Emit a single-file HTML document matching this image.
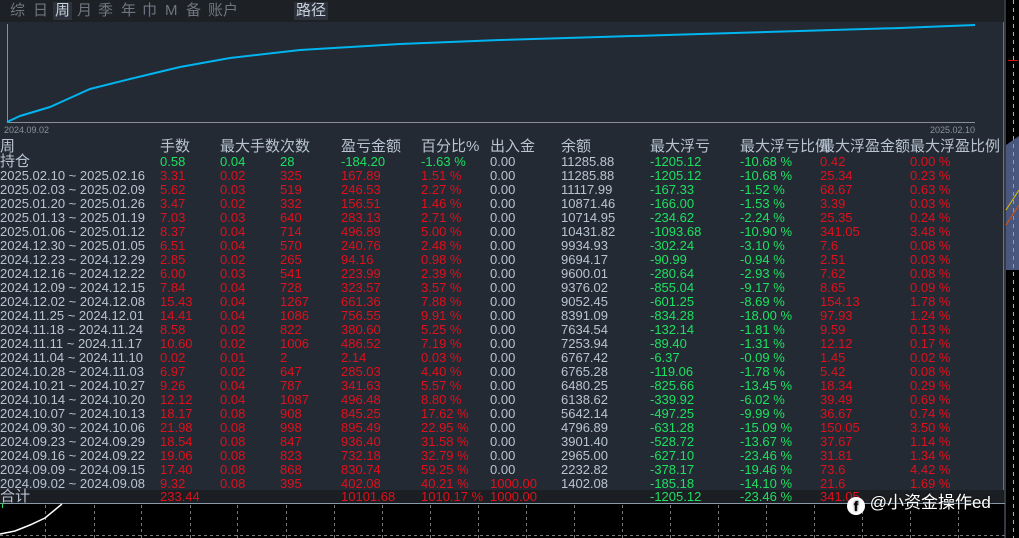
<!DOCTYPE html>
<html><head><meta charset="utf-8">
<style>
*{margin:0;padding:0;box-sizing:border-box}
body{width:1019px;height:538px;background:#000;position:relative;overflow:hidden;font-family:"Liberation Sans","Noto Sans CJK SC",sans-serif}
#top{position:absolute;left:0;top:0;width:1004px;height:22px;background:#1d2025}
#top span{position:absolute;top:2px;font-size:15px;color:#6f7680;line-height:18px}
#top .on{background:#2c333d;color:#c8d0dc;padding:0 2px}
#panel{position:absolute;left:0;top:22px;width:1004px;height:481px;background:#232a33;border-right:1px solid #6a7380}
.r{position:absolute;left:0;height:14px;width:1004px;font-size:13px;line-height:14px;color:#b9c4d2;white-space:nowrap}
.r span{position:absolute;top:0}
.h{font-size:15px;color:#b9c4d2}
.a{left:0}.b{left:160px}.c{left:220px}.d{left:280px}.e{left:341px}.f{left:421px}.g{left:490px}.i{left:561px}.j{left:650px}.k{left:740px}.l{left:820px}.m{left:910px}
.R{color:#e0101c}.G{color:#1ee060}
</style></head><body>
<div id="top">
<span style="left:10px">综</span><span style="left:33px">日</span><span class="on" style="left:53px">周</span><span style="left:77px">月</span><span style="left:98px">季</span><span style="left:121px">年</span><span style="left:142px">巾</span><span style="left:165px">M</span><span style="left:186px">备</span><span style="left:208px">账户</span><span class="on" style="left:294px">路径</span>
</div>
<div id="panel"></div>
<svg style="position:absolute;left:0;top:0" width="1019" height="538">
<line x1="7.5" y1="24" x2="7.5" y2="122" stroke="#8a8f96"/>
<line x1="7" y1="122.5" x2="975" y2="122.5" stroke="#8a8f96"/>
<polyline fill="none" stroke="#00b4f0" stroke-width="2" points="7,122 20,116 50,107 70,98 90,89 130,79 180,67 230,58 300,50 400,44 500,40 600,37 700,34 800,31 900,28 975,25"/>
<line x1="1005" y1="0" x2="1005" y2="538" stroke="#6a7380"/>
<line x1="1013.5" y1="0" x2="1013.5" y2="538" stroke="#aaa" stroke-dasharray="4,4"/>
<line x1="1008" y1="60.5" x2="1018" y2="60.5" stroke="#e01010"/>
<polygon points="1006,145 1019,136 1019,270 1006,270" fill="#7a90d0" opacity=".6"/>
<polyline points="1006,210 1019,190" stroke="#e0c000" fill="none"/>
<polyline points="1006,225 1019,205" stroke="#e05000" fill="none"/>
<line x1="0" y1="503.5" x2="1005" y2="503.5" stroke="#8a9aaa"/>
<g stroke="#777" stroke-dasharray="3,3">
<line x1="45.5" y1="505" x2="45.5" y2="538"/><line x1="94.5" y1="505" x2="94.5" y2="538"/><line x1="141.5" y1="505" x2="141.5" y2="538"/><line x1="190.5" y1="505" x2="190.5" y2="538"/><line x1="237.5" y1="505" x2="237.5" y2="538"/><line x1="286.5" y1="505" x2="286.5" y2="538"/><line x1="334.5" y1="505" x2="334.5" y2="538"/><line x1="382.5" y1="505" x2="382.5" y2="538"/><line x1="430.5" y1="505" x2="430.5" y2="538"/><line x1="478.5" y1="505" x2="478.5" y2="538"/><line x1="526.5" y1="505" x2="526.5" y2="538"/><line x1="574.5" y1="505" x2="574.5" y2="538"/><line x1="622.5" y1="505" x2="622.5" y2="538"/><line x1="670.5" y1="505" x2="670.5" y2="538"/><line x1="718.5" y1="505" x2="718.5" y2="538"/><line x1="766.5" y1="505" x2="766.5" y2="538"/><line x1="814.5" y1="505" x2="814.5" y2="538"/><line x1="862.5" y1="505" x2="862.5" y2="538"/><line x1="910.5" y1="505" x2="910.5" y2="538"/><line x1="958.5" y1="505" x2="958.5" y2="538"/>
<line x1="0" y1="535.5" x2="1005" y2="535.5"/>
</g>
<polyline fill="none" stroke="#fff" stroke-width="1.5" points="0,534 15,531 30,525 45,518 62,504"/>
<line x1="2.5" y1="503" x2="2.5" y2="508" stroke="#1ee060"/>
</svg>
<div class="r" style="top:123px;font-size:9px;color:#8a929c"><span style="left:4px">2024.09.02</span><span style="left:930px">2025.02.10</span></div>
<div class="r h" style="top:139px;height:16px;line-height:16px"><span class="a">周</span><span class="b">手数</span><span class="c">最大手数次数</span><span class="e">盈亏金额</span><span class="f">百分比%</span><span class="g">出入金</span><span class="i">余额</span><span class="j">最大浮亏</span><span class="k">最大浮亏比例</span><span class="l">最大浮盈金额</span><span class="m">最大浮盈比例</span></div>
<div class="r" style="top:155px"><span class="a h">持仓</span><span class="b G">0.58</span><span class="c G">0.04</span><span class="d G">28</span><span class="e G">-184.20</span><span class="f G">-1.63 %</span><span class="g">0.00</span><span class="i">11285.88</span><span class="j G">-1205.12</span><span class="k G">-10.68 %</span><span class="l R">0.42</span><span class="m R">0.00 %</span></div>
<div class="r" style="top:169px"><span class="a">2025.02.10 ~ 2025.02.16</span><span class="b R">3.31</span><span class="c R">0.02</span><span class="d R">325</span><span class="e R">167.89</span><span class="f R">1.51 %</span><span class="g">0.00</span><span class="i">11285.88</span><span class="j G">-1205.12</span><span class="k G">-10.68 %</span><span class="l R">25.34</span><span class="m R">0.23 %</span></div>
<div class="r" style="top:183px"><span class="a">2025.02.03 ~ 2025.02.09</span><span class="b R">5.62</span><span class="c R">0.03</span><span class="d R">519</span><span class="e R">246.53</span><span class="f R">2.27 %</span><span class="g">0.00</span><span class="i">11117.99</span><span class="j G">-167.33</span><span class="k G">-1.52 %</span><span class="l R">68.67</span><span class="m R">0.63 %</span></div>
<div class="r" style="top:197px"><span class="a">2025.01.20 ~ 2025.01.26</span><span class="b R">3.47</span><span class="c R">0.02</span><span class="d R">332</span><span class="e R">156.51</span><span class="f R">1.46 %</span><span class="g">0.00</span><span class="i">10871.46</span><span class="j G">-166.00</span><span class="k G">-1.53 %</span><span class="l R">3.39</span><span class="m R">0.03 %</span></div>
<div class="r" style="top:211px"><span class="a">2025.01.13 ~ 2025.01.19</span><span class="b R">7.03</span><span class="c R">0.03</span><span class="d R">640</span><span class="e R">283.13</span><span class="f R">2.71 %</span><span class="g">0.00</span><span class="i">10714.95</span><span class="j G">-234.62</span><span class="k G">-2.24 %</span><span class="l R">25.35</span><span class="m R">0.24 %</span></div>
<div class="r" style="top:225px"><span class="a">2025.01.06 ~ 2025.01.12</span><span class="b R">8.37</span><span class="c R">0.04</span><span class="d R">714</span><span class="e R">496.89</span><span class="f R">5.00 %</span><span class="g">0.00</span><span class="i">10431.82</span><span class="j G">-1093.68</span><span class="k G">-10.90 %</span><span class="l R">341.05</span><span class="m R">3.48 %</span></div>
<div class="r" style="top:239px"><span class="a">2024.12.30 ~ 2025.01.05</span><span class="b R">6.51</span><span class="c R">0.04</span><span class="d R">570</span><span class="e R">240.76</span><span class="f R">2.48 %</span><span class="g">0.00</span><span class="i">9934.93</span><span class="j G">-302.24</span><span class="k G">-3.10 %</span><span class="l R">7.6</span><span class="m R">0.08 %</span></div>
<div class="r" style="top:253px"><span class="a">2024.12.23 ~ 2024.12.29</span><span class="b R">2.85</span><span class="c R">0.02</span><span class="d R">265</span><span class="e R">94.16</span><span class="f R">0.98 %</span><span class="g">0.00</span><span class="i">9694.17</span><span class="j G">-90.99</span><span class="k G">-0.94 %</span><span class="l R">2.51</span><span class="m R">0.03 %</span></div>
<div class="r" style="top:267px"><span class="a">2024.12.16 ~ 2024.12.22</span><span class="b R">6.00</span><span class="c R">0.03</span><span class="d R">541</span><span class="e R">223.99</span><span class="f R">2.39 %</span><span class="g">0.00</span><span class="i">9600.01</span><span class="j G">-280.64</span><span class="k G">-2.93 %</span><span class="l R">7.62</span><span class="m R">0.08 %</span></div>
<div class="r" style="top:281px"><span class="a">2024.12.09 ~ 2024.12.15</span><span class="b R">7.84</span><span class="c R">0.04</span><span class="d R">728</span><span class="e R">323.57</span><span class="f R">3.57 %</span><span class="g">0.00</span><span class="i">9376.02</span><span class="j G">-855.04</span><span class="k G">-9.17 %</span><span class="l R">8.65</span><span class="m R">0.09 %</span></div>
<div class="r" style="top:295px"><span class="a">2024.12.02 ~ 2024.12.08</span><span class="b R">15.43</span><span class="c R">0.04</span><span class="d R">1267</span><span class="e R">661.36</span><span class="f R">7.88 %</span><span class="g">0.00</span><span class="i">9052.45</span><span class="j G">-601.25</span><span class="k G">-8.69 %</span><span class="l R">154.13</span><span class="m R">1.78 %</span></div>
<div class="r" style="top:309px"><span class="a">2024.11.25 ~ 2024.12.01</span><span class="b R">14.41</span><span class="c R">0.04</span><span class="d R">1086</span><span class="e R">756.55</span><span class="f R">9.91 %</span><span class="g">0.00</span><span class="i">8391.09</span><span class="j G">-834.28</span><span class="k G">-18.00 %</span><span class="l R">97.93</span><span class="m R">1.24 %</span></div>
<div class="r" style="top:323px"><span class="a">2024.11.18 ~ 2024.11.24</span><span class="b R">8.58</span><span class="c R">0.02</span><span class="d R">822</span><span class="e R">380.60</span><span class="f R">5.25 %</span><span class="g">0.00</span><span class="i">7634.54</span><span class="j G">-132.14</span><span class="k G">-1.81 %</span><span class="l R">9.59</span><span class="m R">0.13 %</span></div>
<div class="r" style="top:337px"><span class="a">2024.11.11 ~ 2024.11.17</span><span class="b R">10.60</span><span class="c R">0.02</span><span class="d R">1006</span><span class="e R">486.52</span><span class="f R">7.19 %</span><span class="g">0.00</span><span class="i">7253.94</span><span class="j G">-89.40</span><span class="k G">-1.31 %</span><span class="l R">12.12</span><span class="m R">0.17 %</span></div>
<div class="r" style="top:351px"><span class="a">2024.11.04 ~ 2024.11.10</span><span class="b R">0.02</span><span class="c R">0.01</span><span class="d R">2</span><span class="e R">2.14</span><span class="f R">0.03 %</span><span class="g">0.00</span><span class="i">6767.42</span><span class="j G">-6.37</span><span class="k G">-0.09 %</span><span class="l R">1.45</span><span class="m R">0.02 %</span></div>
<div class="r" style="top:365px"><span class="a">2024.10.28 ~ 2024.11.03</span><span class="b R">6.97</span><span class="c R">0.02</span><span class="d R">647</span><span class="e R">285.03</span><span class="f R">4.40 %</span><span class="g">0.00</span><span class="i">6765.28</span><span class="j G">-119.06</span><span class="k G">-1.78 %</span><span class="l R">5.42</span><span class="m R">0.08 %</span></div>
<div class="r" style="top:379px"><span class="a">2024.10.21 ~ 2024.10.27</span><span class="b R">9.26</span><span class="c R">0.04</span><span class="d R">787</span><span class="e R">341.63</span><span class="f R">5.57 %</span><span class="g">0.00</span><span class="i">6480.25</span><span class="j G">-825.66</span><span class="k G">-13.45 %</span><span class="l R">18.34</span><span class="m R">0.29 %</span></div>
<div class="r" style="top:393px"><span class="a">2024.10.14 ~ 2024.10.20</span><span class="b R">12.12</span><span class="c R">0.04</span><span class="d R">1087</span><span class="e R">496.48</span><span class="f R">8.80 %</span><span class="g">0.00</span><span class="i">6138.62</span><span class="j G">-339.92</span><span class="k G">-6.02 %</span><span class="l R">39.49</span><span class="m R">0.69 %</span></div>
<div class="r" style="top:407px"><span class="a">2024.10.07 ~ 2024.10.13</span><span class="b R">18.17</span><span class="c R">0.08</span><span class="d R">908</span><span class="e R">845.25</span><span class="f R">17.62 %</span><span class="g">0.00</span><span class="i">5642.14</span><span class="j G">-497.25</span><span class="k G">-9.99 %</span><span class="l R">36.67</span><span class="m R">0.74 %</span></div>
<div class="r" style="top:421px"><span class="a">2024.09.30 ~ 2024.10.06</span><span class="b R">21.98</span><span class="c R">0.08</span><span class="d R">998</span><span class="e R">895.49</span><span class="f R">22.95 %</span><span class="g">0.00</span><span class="i">4796.89</span><span class="j G">-631.28</span><span class="k G">-15.09 %</span><span class="l R">150.05</span><span class="m R">3.50 %</span></div>
<div class="r" style="top:435px"><span class="a">2024.09.23 ~ 2024.09.29</span><span class="b R">18.54</span><span class="c R">0.08</span><span class="d R">847</span><span class="e R">936.40</span><span class="f R">31.58 %</span><span class="g">0.00</span><span class="i">3901.40</span><span class="j G">-528.72</span><span class="k G">-13.67 %</span><span class="l R">37.67</span><span class="m R">1.14 %</span></div>
<div class="r" style="top:449px"><span class="a">2024.09.16 ~ 2024.09.22</span><span class="b R">19.06</span><span class="c R">0.08</span><span class="d R">823</span><span class="e R">732.18</span><span class="f R">32.79 %</span><span class="g">0.00</span><span class="i">2965.00</span><span class="j G">-627.10</span><span class="k G">-23.46 %</span><span class="l R">31.81</span><span class="m R">1.34 %</span></div>
<div class="r" style="top:463px"><span class="a">2024.09.09 ~ 2024.09.15</span><span class="b R">17.40</span><span class="c R">0.08</span><span class="d R">868</span><span class="e R">830.74</span><span class="f R">59.25 %</span><span class="g">0.00</span><span class="i">2232.82</span><span class="j G">-378.17</span><span class="k G">-19.46 %</span><span class="l R">73.6</span><span class="m R">4.42 %</span></div>
<div class="r" style="top:477px"><span class="a">2024.09.02 ~ 2024.09.08</span><span class="b R">9.32</span><span class="c R">0.08</span><span class="d R">395</span><span class="e R">402.08</span><span class="f R">40.21 %</span><span class="g R">1000.00</span><span class="i">1402.08</span><span class="j G">-185.18</span><span class="k G">-14.10 %</span><span class="l R">21.6</span><span class="m R">1.69 %</span></div>
<div class="r" style="top:490px;height:13px;background:#1b1e22"><span class="a h" style="line-height:14px">合计</span><span class="b R">233.44</span><span class="e R">10101.68</span><span class="f R">1010.17 %</span><span class="g R">1000.00</span><span class="j G">-1205.12</span><span class="k G">-23.46 %</span><span class="l R">341.05</span></div>
<div style="position:absolute;left:847px;top:492px;height:22px;font-size:17px;line-height:22px;color:#fff;white-space:nowrap;text-shadow:0 0 2px #000"><span style="display:inline-block;width:18px;height:18px;border-radius:9px;background:#fff;color:#000;font-size:14px;line-height:18px;text-align:center;font-weight:bold;vertical-align:-3px">f</span> @小资金操作ed</div>
</body></html>
